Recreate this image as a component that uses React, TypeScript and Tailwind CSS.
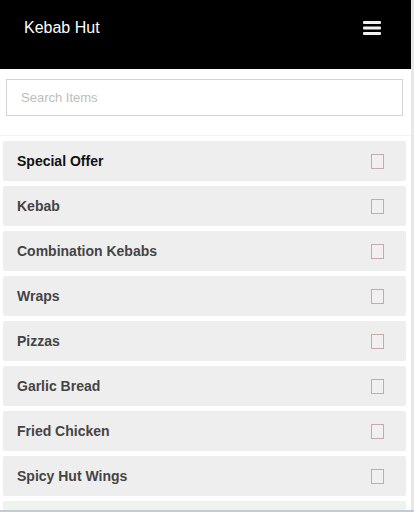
const items = [
  "Special Offer",
  "Kebab",
  "Combination Kebabs",
  "Wraps",
  "Pizzas",
  "Garlic Bread",
  "Fried Chicken",
  "Spicy Hut Wings",
];

export default function App() {
  return (
    <div className="flex h-[512px] flex-col overflow-hidden bg-white font-['Liberation_Sans',Arial,sans-serif]">
      <div className="flex min-h-0 flex-1">
        <div className="w-[411px] shrink-0">
          <header className="flex h-[69px] items-start justify-between bg-black pt-[18px] pl-6 pr-[30px]">
            <span className="text-[16px] leading-[20px] text-white">Kebab Hut</span>
            <svg width="18" height="16" viewBox="0 0 18 16" className="mt-[2px]">
              <rect x="0" y="1" width="18" height="3" rx="1" fill="#f2f2f2" />
              <rect x="0" y="6.5" width="18" height="3" rx="1" fill="#f2f2f2" />
              <rect x="0" y="12" width="18" height="3" rx="1" fill="#f2f2f2" />
            </svg>
          </header>
          <div className="pl-[6px] pr-[8px] pt-[10px] pb-[19px]">
            <input
              placeholder="Search Items"
              className="h-[37px] w-full border border-[#d4d4d4] px-[14px] text-[13px] text-[#555] outline-none placeholder:text-[#bdbdbd]"
            />
          </div>
          <div className="border-t border-[#f3f3f3] pl-[3px] pr-[5px] pt-[5px]">
            <ul className="flex flex-col gap-[5px]">
              {items.map((name, i) => (
                <li
                  key={name}
                  className="flex h-[40px] items-center justify-between rounded-[2px] bg-[#efeeef] pl-[14px] pr-[22px]"
                >
                  <span
                    className={
                      "text-[14px] font-bold " + (i === 0 ? "text-[#111]" : "text-[#444]")
                    }
                  >
                    {name}
                  </span>
                  <span className="h-[15px] w-[13px] border border-[#c4aaaa] bg-[#f1efef]" />
                </li>
              ))}
              <li className="h-[40px] rounded-[2px] bg-[#eef3ec]" />
            </ul>
          </div>
        </div>
        <div className="w-[3px] bg-[#e8e8e8]" />
      </div>
      <div className="h-[2px] shrink-0 bg-[#c3cad6]" />
    </div>
  );
}
